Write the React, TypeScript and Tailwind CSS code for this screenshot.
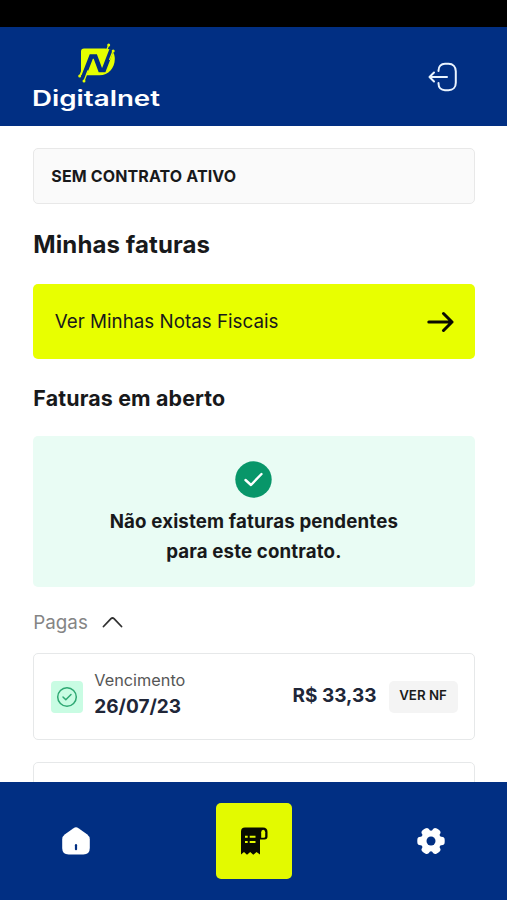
import type { ReactNode } from "react";

function Logo() {
  return (
    <svg width="130" height="69" viewBox="0 0 130 69" className="block">
      <path d="M51 6.500h20.500c7 0 10.300 4 10.300 10.500 0 9-6.300 16.300-15.300 16.300H48V9.500q0-3 3-3z" fill="#e6ff00" />
      <path d="M50.300 35L58.300 14.500h4L67.300 28h3.500L78.500 8" fill="none" stroke="#012f83" strokeWidth="4.600" />
      <path d="M75.500 3.500L71.800 13M79.800 9.500L76.500 18M47 33.500l3.500-9M51.200 38.500L55 28.500" fill="none" stroke="#e6ff00" strokeWidth="1.300" />
      <circle cx="75.700" cy="3" r="1.500" fill="#e6ff00" />
      <circle cx="80.200" cy="9" r="1.500" fill="#e6ff00" />
      <circle cx="46.700" cy="34" r="1.500" fill="#e6ff00" />
      <circle cx="51" cy="39" r="1.500" fill="#e6ff00" />
      <text x="-1" y="63.500" textLength="128" lengthAdjust="spacingAndGlyphs" fontSize="21" fontWeight="600" fill="#fff" fontFamily="Inter, sans-serif">
        Digitalnet
      </text>
    </svg>
  );
}

function LogoutIcon() {
  return (
    <svg width="30" height="30" viewBox="0 0 30 30" fill="none" stroke="#eaf4ff" strokeWidth="2" strokeLinecap="round" strokeLinejoin="round">
      <path d="M10.500 9V8.500C10.500 4.500 13 1.800 17 1.800h3.500c4.500 0 7.300 3 7.300 7.500v11.400c0 4.500-2.800 7.500-7.300 7.500H17c-4 0-6.500-2.700-6.500-6.700V21" />
      <path d="M19 15H1.500M6 10.500L1.500 15 6 19.500" />
    </svg>
  );
}

function InvoiceCard({ children }: { children?: ReactNode }) {
  return (
    <div className="h-[87px] shrink-0 rounded-[5px] border-[1.5px] border-[#e6e8e9] bg-white flex items-center pl-[17px] pr-4">
      {children}
    </div>
  );
}

function NavItem({ active, children }: { active?: boolean; children: ReactNode }) {
  return (
    <button className={`w-[76px] h-[76px] rounded-[5px] flex items-center justify-center ${active ? "bg-[#e3fa00]" : ""}`}>
      {children}
    </button>
  );
}

export default function App() {
  return (
    <div className="w-[507px] h-[900px] overflow-hidden flex flex-col bg-white font-['Inter',sans-serif] text-[#18191b]">
      <div className="h-[27px] shrink-0 bg-black" />
      <header className="h-[99px] shrink-0 bg-[#012f83] flex items-center justify-between pl-[33px] pr-[49px]">
        <Logo />
        <LogoutIcon />
      </header>

      <main className="flex-1 min-h-0 overflow-hidden flex flex-col pl-[33.300px] pr-[32.500px] pt-[22px]">
        <div className="h-[56px] shrink-0 rounded-[5px] border-[1.5px] border-[#e8e8e8] bg-[#fafafa] px-[17px] flex items-center text-[16px] font-bold tracking-[0.13px]">
          <span className="-mt-px">SEM CONTRATO ATIVO</span>
        </div>
        <h1 className="mt-[25px] text-[24px] leading-[32px] shrink-0 font-bold tracking-[0.1px]">Minhas faturas</h1>
        <button className="mt-[23px] h-[75px] shrink-0 rounded-[5px] bg-[#e8ff00] pl-[21.500px] pr-[21px] flex items-center justify-between text-[18.800px]">
          <span className="mt-0.5">Ver Minhas Notas Fiscais</span>
          <svg width="27" height="22" viewBox="0 0 27 22" fill="none" stroke="#0a0a00" strokeWidth="3" strokeLinecap="round" strokeLinejoin="round">
            <path d="M1.800 11H25M16.500 2.500L25 11l-8.500 8.500" />
          </svg>
        </button>
        <h2 className="mt-[25px] text-[21.400px] leading-[28px] shrink-0 font-bold tracking-[0.15px]">Faturas em aberto</h2>
        <div className="mt-6 h-[151px] shrink-0 rounded-[5px] bg-[#e9fcf4] flex flex-col items-center pt-[25px]">
          <svg width="37" height="37" viewBox="0 0 37 37" fill="none">
            <circle cx="18.500" cy="18.500" r="18.200" fill="#089669" />
            <path d="M10.500 19l5.500 5 10.500-11" stroke="#fff" strokeWidth="2.400" strokeLinecap="round" strokeLinejoin="round" />
          </svg>
          <p className="mt-[9px] w-[320px] text-center text-[18.700px] leading-[30px] font-bold tracking-[0.14px]">
            Não existem faturas pendentes para este contrato.
          </p>
        </div>
        <div className="mt-[21px] h-[30px] shrink-0 flex items-center gap-[14px] text-[18.800px] text-[#858585]">
          Pagas
          <svg width="21" height="12" viewBox="0 0 21 12" fill="none" stroke="#303030" strokeWidth="1.800" strokeLinecap="round" strokeLinejoin="round" className="-mt-0.5">
            <path d="M1.500 10.500L9 2.700q1.500-1.500 3 0l7.500 7.800" />
          </svg>
        </div>
        <div className="mt-[15px] flex flex-col gap-[22px]">
          <InvoiceCard>
            <div className="w-8 h-8 rounded-[4px] bg-[#c9fce3] flex items-center justify-center">
              <svg width="22" height="22" viewBox="0 0 22 22" fill="none" stroke="#2fa873" strokeWidth="1.500" strokeLinecap="round" strokeLinejoin="round">
                <circle cx="11" cy="11" r="9.300" />
                <path d="M7 11l2.800 2.800L15 8.500" />
              </svg>
            </div>
            <div className="ml-[11px] flex-1 pb-[5px]">
              <p className="text-[16.300px] leading-[22px] text-[#565656]">Vencimento</p>
              <p className="mt-1 text-[19px] leading-[24px] font-bold text-[#202638]">26/07/23</p>
            </div>
            <p className="text-[19px] font-bold text-[#202638]">R$ 33,33</p>
            <button className="ml-3 w-[69px] h-8 rounded-[5px] bg-[#f4f4f4] text-[13.300px] font-semibold text-[#1c1c1c] pb-px">
              VER NF
            </button>
          </InvoiceCard>
          <InvoiceCard />
        </div>
      </main>

      <nav className="h-[118px] shrink-0 bg-[#012f83] flex items-center justify-between px-[38px]">
        <NavItem>
          <svg width="28" height="28" viewBox="0 0 28 28">
            <path d="M11.500 1.200q2.500-1.700 5 0l8.500 6q2.800 2 2.800 5.300v8.500q0 6.500-6.500 6.500H6.700Q.2 27.500.2 21v-8.500q0-3.300 2.800-5.300z" fill="#fff" />
            <path d="M14 18.200v4" stroke="#012f83" strokeWidth="2.200" strokeLinecap="round" />
          </svg>
        </NavItem>
        <NavItem active>
          <svg width="28" height="28" viewBox="0 0 28 28">
            <path d="M5 .5h18q4.500 0 4.500 4.500v4.500q0 3-3 3h-4.500v15l-3.500-2.500-3.200 2.800-3.100-2.800-3.200 2.800-3-2.800L1 27.500V4.500q0-4 4-4z" fill="#080b00" />
            <path d="M21.200 10.700V5.200q0-2.500 2-2.500t2 2.500v4q0 1.500-1.500 1.500z" fill="#e3fa00" />
            <path d="M5 9.800h2.700M9.700 9.800H15.500M5 15h2.700M9.700 15H15.500" stroke="#e3fa00" strokeWidth="2" />
          </svg>
        </NavItem>
        <NavItem>
          <svg width="28" height="28" viewBox="0 0 28 28">
            <g fill="#fff">
              <circle cx="14" cy="14" r="10.500" />
              <rect x="0.300" y="9.700" width="27.400" height="8.600" rx="3.200" />
              <rect x="0.300" y="9.700" width="27.400" height="8.600" rx="3.200" transform="rotate(60 14 14)" />
              <rect x="0.300" y="9.700" width="27.400" height="8.600" rx="3.200" transform="rotate(120 14 14)" />
            </g>
            <circle cx="14" cy="14" r="4.500" fill="#012f83" />
          </svg>
        </NavItem>
      </nav>
    </div>
  );
}
